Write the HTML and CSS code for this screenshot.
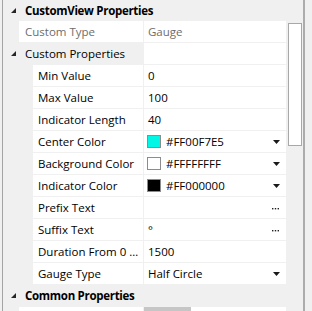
FILE: index.html
```html
<!DOCTYPE html>
<html>
<head>
    <meta charset="utf-8">
    <title>CustomView Properties</title>
    <link rel="stylesheet" href="styles.css">
</head>
<body>
    <div class="frame">
        <div class="pad"></div>
        <div class="grid">
            <div class="cat">
                <svg class="expander" width="5" height="5" viewBox="0 0 5 5"><polygon points="5,0 5,5 0,5"/></svg>
                <span class="cat-label">CustomView Properties</span>
            </div>

            <div class="row">
                <div class="name readonly">Custom Type</div>
                <div class="value readonly">Gauge</div>
            </div>

            <div class="row group">
                <div class="name">
                    <svg class="expander" width="5" height="5" viewBox="0 0 5 5"><polygon points="5,0 5,5 0,5"/></svg>
                    <span>Custom Properties</span>
                </div>
                <div class="value"></div>
            </div>

            <div class="row sub">
                <div class="name">Min Value</div>
                <div class="value">0</div>
            </div>
            <div class="row sub">
                <div class="name">Max Value</div>
                <div class="value">100</div>
            </div>
            <div class="row sub">
                <div class="name">Indicator Length</div>
                <div class="value">40</div>
            </div>
            <div class="row sub">
                <div class="name">Center Color</div>
                <div class="value">
                    <span class="swatch" style="background: #00f7e5"></span>
                    <span class="text">#FF00F7E5</span>
                    <svg class="drop" width="7" height="4" viewBox="0 0 7 4"><polygon points="0,0 7,0 3.5,4"/></svg>
                </div>
            </div>
            <div class="row sub">
                <div class="name">Background Color</div>
                <div class="value">
                    <span class="swatch" style="background: #ffffff"></span>
                    <span class="text">#FFFFFFFF</span>
                    <svg class="drop" width="7" height="4" viewBox="0 0 7 4"><polygon points="0,0 7,0 3.5,4"/></svg>
                </div>
            </div>
            <div class="row sub">
                <div class="name">Indicator Color</div>
                <div class="value">
                    <span class="swatch" style="background: #000000"></span>
                    <span class="text">#FF000000</span>
                    <svg class="drop" width="7" height="4" viewBox="0 0 7 4"><polygon points="0,0 7,0 3.5,4"/></svg>
                </div>
            </div>
            <div class="row sub">
                <div class="name">Prefix Text</div>
                <div class="value">
                    <span class="text"></span>
                    <svg class="dots" width="7" height="2" viewBox="0 0 7 2"><rect x="0" y="0" width="1.4" height="1.4"/><rect x="2.8" y="0" width="1.4" height="1.4"/><rect x="5.6" y="0" width="1.4" height="1.4"/></svg>
                </div>
            </div>
            <div class="row sub">
                <div class="name">Suffix Text</div>
                <div class="value">
                    <span class="text">°</span>
                    <svg class="dots" width="7" height="2" viewBox="0 0 7 2"><rect x="0" y="0" width="1.4" height="1.4"/><rect x="2.8" y="0" width="1.4" height="1.4"/><rect x="5.6" y="0" width="1.4" height="1.4"/></svg>
                </div>
            </div>
            <div class="row sub">
                <div class="name">Duration From 0 To Value</div>
                <div class="value">1500</div>
            </div>
            <div class="row sub">
                <div class="name">Gauge Type</div>
                <div class="value">
                    <span class="text">Half Circle</span>
                    <svg class="drop" width="7" height="4" viewBox="0 0 7 4"><polygon points="0,0 7,0 3.5,4"/></svg>
                </div>
            </div>

            <div class="cat">
                <svg class="expander" width="5" height="5" viewBox="0 0 5 5"><polygon points="5,0 5,5 0,5"/></svg>
                <span class="cat-label">Common Properties</span>
            </div>

            <div class="row">
                <div class="name"></div>
                <div class="value partial"><span class="bar"></span></div>
            </div>
        </div>
        <div class="vscroll">
            <div class="thumb"></div>
        </div>
        <div class="edge"></div>
    </div>
</body>
</html>
```

FILE: styles.css
```css
html, body {
    margin: 0;
    height: 100%;
}

body {
    background: #f0f0f0;
    font-family: "Open Sans", "Noto Sans", sans-serif;
    font-size: 11.5px;
    color: #000;
    overflow: hidden;
}

.frame {
    display: flex;
    height: 311px;
}

.pad {
    width: 2px;
    flex: none;
}

.grid {
    width: 283px;
    flex: none;
    border-left: 1px solid #a5a5a5;
    display: flex;
    flex-direction: column;
    gap: 1px;
    overflow: hidden;
}

.cat {
    height: 20px;
    flex: none;
    display: flex;
    align-items: center;
    font-weight: bold;
}

.cat-label {
    letter-spacing: -0.3px;
}

.grid .cat:nth-last-child(2) {
    height: 21px;
}

.expander {
    fill: #262626;
    margin-left: 8px;
    margin-right: 9px;
    flex: none;
}

.row {
    height: 21px;
    flex: none;
    display: grid;
    grid-template-columns: 140px 142px;
    column-gap: 1px;
}

.name {
    background: #fff;
    margin-left: 16px;
    padding-left: 6px;
    display: flex;
    align-items: center;
    white-space: nowrap;
    overflow: hidden;
    min-width: 0;
}

.row.sub .name {
    margin-left: 30px;
    padding-left: 5px;
    padding-right: 3px;
    display: block;
    line-height: 21px;
    text-overflow: ellipsis;
}

.row.group .name {
    background: transparent;
    margin-left: 0;
    padding-left: 0;
}

.value {
    background: #fff;
    padding-left: 4px;
    padding-right: 6px;
    display: flex;
    align-items: center;
    white-space: nowrap;
}

.readonly {
    color: #6d6d6d;
}

.value .text {
    flex: 1;
}

.swatch {
    width: 12px;
    height: 11px;
    border: 1px solid #8c8c8c;
    margin-left: -1px;
    margin-right: 5px;
    flex: none;
}

.drop {
    fill: #1a1a1a;
    flex: none;
}

.dots {
    fill: #222;
    flex: none;
    margin-right: 1px;
    margin-top: 3px;
}

.value.partial {
    padding: 0;
    align-items: stretch;
}

.bar {
    width: 47px;
    background: #c6c6c6;
}

.vscroll {
    width: 17px;
    flex: none;
}

.thumb {
    margin: 23px 0 0 2px;
    width: 12px;
    height: 121px;
    border: 1px solid #a8a8a8;
    background: #fff;
}

.edge {
    width: 2px;
    flex: none;
    background: #acacac;
}
```
